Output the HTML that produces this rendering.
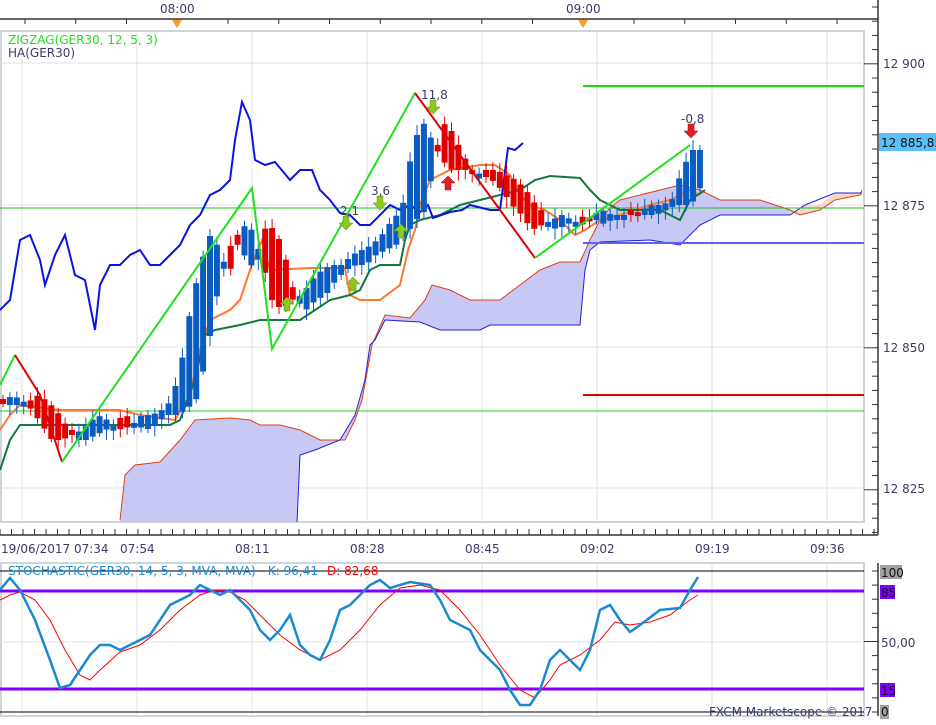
<!DOCTYPE html>
<html><head><meta charset="utf-8"><style>
body{margin:0;width:936px;height:720px;overflow:hidden;background:#fff;font-family:"Liberation Sans","DejaVu Sans",sans-serif}
svg text{font-family:"DejaVu Sans","Liberation Sans",sans-serif;font-size:12px;fill:#3a3a6a}
</style></head><body>
<svg width="936" height="720" viewBox="0 0 936 720" xmlns="http://www.w3.org/2000/svg">
<line x1="0" y1="19" x2="878" y2="19" stroke="#333" stroke-width="1.5"/>
<g id="toptk" stroke="#333"></g>
<text x="160" y="13">08:00</text><text x="566" y="13">09:00</text>
<polygon points="172,20 182,20 177,28" fill="#f5a020"/>
<polygon points="578,20 588,20 583,28" fill="#f5a020"/>
<rect x="1" y="31" width="863" height="491" fill="#fff" stroke="#ccd4dc" stroke-width="2"/>
<g stroke="#e0e0e0" stroke-width="1">
<line x1="22" y1="31" x2="22" y2="522"/><line x1="137" y1="31" x2="137" y2="522"/><line x1="252" y1="31" x2="252" y2="522"/><line x1="367" y1="31" x2="367" y2="522"/><line x1="482" y1="31" x2="482" y2="522"/><line x1="597" y1="31" x2="597" y2="522"/><line x1="712" y1="31" x2="712" y2="522"/><line x1="827" y1="31" x2="827" y2="522"/>
<line x1="0" y1="63" x2="864" y2="63"/><line x1="0" y1="205" x2="864" y2="205"/><line x1="0" y1="347" x2="864" y2="347"/><line x1="0" y1="488" x2="864" y2="488"/>
</g>
<polygon fill="#c8c8f5" points="120,520 125,475 135,465 160,462 180,440 195,420 230,418 250,420 260,425 280,425 300,430 320,440 345,440 355,420 362,400 372,345 385,315 410,318 425,300 432,285 450,290 470,300 500,300 520,285 540,270 560,262 580,262 590,240 600,220 610,208 620,200 640,195 660,190 680,185 700,190 720,200 760,200 790,210 790,215 720,215 700,225 680,245 650,240 600,242 590,250 585,270 580,325 490,325 480,330 440,330 420,322 385,320 375,340 370,345 365,380 355,415 340,440 315,450 300,455 297,522 120,522"/>
<polygon fill="#f5d8c8" points="790,210 800,215 820,210 835,200 860,195 862,195 862,193 835,193 820,205 805,205 790,215"/>
<polyline fill="none" stroke="#e04010" stroke-width="1" points="120,520 125,475 135,465 160,462 180,440 195,420 230,418 250,420 260,425 280,425 300,430 320,440 345,440 355,420 362,400 372,345 385,315 410,318 425,300 432,285 450,290 470,300 500,300 520,285 540,270 560,262 580,262 590,240 600,220 610,208 620,200 640,195 660,190 680,185 700,190 720,200 760,200 790,210 800,215 820,210 835,200 860,195 862,190"/>
<polyline fill="none" stroke="#2020e0" stroke-width="1" points="297,522 300,455 315,450 340,440 355,415 365,380 370,345 375,340 385,320 420,322 440,330 480,330 490,325 580,325 585,270 590,250 600,242 650,240 680,245 700,225 720,215 790,215 805,205 835,193 862,193"/>
<line x1="0" y1="208" x2="864" y2="208" stroke="#20c020" stroke-width="1"/>
<line x1="0" y1="411" x2="864" y2="411" stroke="#20d020" stroke-width="1"/>
<line x1="583" y1="86" x2="864" y2="86" stroke="#10e010" stroke-width="2"/>
<line x1="583" y1="395" x2="864" y2="395" stroke="#e00000" stroke-width="2"/>
<line x1="583" y1="243" x2="864" y2="243" stroke="#6060f0" stroke-width="2"/>
<polyline fill="none" stroke="#ff7830" stroke-width="2" points="0,430 10,415 20,405 60,410 120,410 140,415 175,420 190,395 200,350 210,320 230,310 240,300 250,270 262,240 270,270 310,268 345,268 350,295 360,300 380,300 400,285 408,250 415,230 420,205 430,180 450,170 480,165 495,165 510,175 520,195 530,205 545,210 560,220 575,235 585,230 600,220 620,215 650,205 670,200 690,190 700,195"/>
<polyline fill="none" stroke="#107840" stroke-width="2" points="0,470 10,440 20,425 170,425 180,420 195,380 205,335 215,330 240,325 260,320 300,320 330,300 350,295 360,290 370,270 380,265 400,265 405,240 410,225 420,220 440,215 460,205 480,200 520,190 535,180 550,176 580,178 590,190 600,200 610,205 620,210 660,210 670,215 680,220 690,200 705,190"/>
<polyline fill="none" stroke="#0a14e0" stroke-width="2" points="0,310 10,300 20,240 30,235 40,260 45,285 55,255 65,235 75,275 85,280 95,330 100,285 110,265 120,265 130,255 140,250 150,265 160,265 170,255 180,245 190,225 200,215 210,195 220,190 230,180 235,140 242,102 250,120 255,160 265,165 275,162 290,180 300,170 312,170 320,190 330,200 340,213 350,215 360,225 370,225 380,215 390,205 400,210 410,205 420,212 428,205 433,218 450,212 462,210 470,205 490,210 500,210 508,148 515,150 523,143"/>
<g id="candles"></g>
<polyline fill="none" stroke="#20e020" stroke-width="2" points="0,385 15,355"/>
<polyline fill="none" stroke="#e00000" stroke-width="2" points="15,355 40,395 62,462"/>
<polyline fill="none" stroke="#20e020" stroke-width="2" points="62,462 252,188 272,349 415,93"/>
<polyline fill="none" stroke="#e00000" stroke-width="2" points="415,93 535,258"/>
<polyline fill="none" stroke="#20e020" stroke-width="2" points="535,258 690,145"/>
<g id="marks"></g>
<text x="421" y="99">11,8</text><text x="371" y="195">3,6</text><text x="340" y="215">2,1</text><text x="681" y="123">-0,8</text>
<text x="8" y="44" style="fill:#20e020">ZIGZAG(GER30, 12, 5, 3)</text>
<text x="8" y="57">HA(GER30)</text>
<line x1="878" y1="0" x2="878" y2="535" stroke="#333" stroke-width="1.5"/>
<g id="rtk" stroke="#333"></g>
<text x="883" y="68">12 900</text><text x="883" y="210">12 875</text><text x="883" y="352">12 850</text><text x="883" y="493">12 825</text>
<rect x="879" y="133" width="57" height="18" fill="#5bc0f8"/>
<text x="881" y="147" style="fill:#111">12 885,85</text>
<line x1="0" y1="535" x2="878" y2="535" stroke="#333" stroke-width="1.5"/>
<g id="btk" stroke="#333"></g>
<text x="1" y="553">19/06/2017 07:34</text><text x="120" y="553">07:54</text><text x="235" y="553">08:11</text><text x="350" y="553">08:28</text><text x="465" y="553">08:45</text><text x="580" y="553">09:02</text><text x="695" y="553">09:19</text><text x="810" y="553">09:36</text>
<rect x="1" y="563" width="863" height="153" fill="#fff" stroke="#ccd4dc" stroke-width="2"/>
<g stroke="#e0e0e0"><line x1="22" y1="563" x2="22" y2="716"/><line x1="137" y1="563" x2="137" y2="716"/><line x1="252" y1="563" x2="252" y2="716"/><line x1="367" y1="563" x2="367" y2="716"/><line x1="482" y1="563" x2="482" y2="716"/><line x1="597" y1="563" x2="597" y2="716"/><line x1="712" y1="563" x2="712" y2="716"/><line x1="827" y1="563" x2="827" y2="716"/><line x1="0" y1="642" x2="864" y2="642"/></g>
<line x1="0" y1="571" x2="864" y2="571" stroke="#000"/>
<line x1="0" y1="712" x2="864" y2="712" stroke="#000"/>
<line x1="0" y1="591" x2="864" y2="591" stroke="#8000ff" stroke-width="3"/>
<line x1="0" y1="689" x2="864" y2="689" stroke="#8000ff" stroke-width="3"/>
<text x="8" y="575" style="fill:#1a8ad0" textLength="310" lengthAdjust="spacingAndGlyphs">STOCHASTIC(GER30, 14, 5, 3, MVA, MVA) - K: 96,41</text>
<text x="327" y="575" style="fill:#f00">D: 82,68</text>
<polyline fill="none" stroke="#f00" stroke-width="1" points="0,600 10,595 20,592 35,600 50,620 65,650 80,675 90,680 100,670 120,652 140,645 160,630 180,610 200,595 215,590 230,592 245,600 260,615 280,635 300,650 320,660 340,650 360,630 380,605 400,588 420,585 440,590 460,610 480,635 500,665 520,690 535,698 550,680 560,665 580,655 600,640 615,622 630,625 650,622 670,615 690,600 698,595"/>
<polyline fill="none" stroke="#1a8ad0" stroke-width="2.5" points="0,590 10,578 20,590 35,620 50,660 60,688 70,685 80,670 90,655 100,645 110,645 120,650 130,645 140,640 150,635 160,620 170,605 180,600 190,595 200,585 210,590 220,595 230,590 240,600 250,610 260,630 270,640 280,630 290,615 300,645 310,655 320,660 330,640 340,610 350,605 360,595 370,585 380,580 390,588 410,582 430,585 440,600 450,620 470,630 480,650 490,660 500,670 510,690 520,705 530,705 540,690 550,660 560,650 570,660 580,670 590,650 600,610 610,605 620,620 630,632 640,625 660,610 680,608 690,590 698,577"/>
<text x="709" y="716" style="fill:#3a3a6a">FXCM Marketscope © 2017</text>
<line x1="878" y1="563" x2="878" y2="716" stroke="#333" stroke-width="1.5"/>
<g id="stk" stroke="#333"></g>
<rect x="880" y="565" width="22" height="14" fill="#a0a0a0"/><text x="881" y="577" style="fill:#111">100</text>
<rect x="880" y="585" width="15" height="14" fill="#8000ff"/><text x="881" y="597" style="fill:#111">85</text>
<text x="881" y="647">50,00</text>
<rect x="880" y="683" width="15" height="14" fill="#8000ff"/><text x="881" y="695" style="fill:#111">15</text>
<rect x="880" y="705" width="9" height="14" fill="#a0a0a0"/><text x="881" y="716" style="fill:#111">0</text>
</svg>
<script>
(function(){
var NS="http://www.w3.org/2000/svg";
function el(p,t,a){var e=document.createElementNS(NS,t);for(var k in a)e.setAttribute(k,a[k]);document.getElementById(p).appendChild(e);return e;}
var ys=[405,395,400,410,425,440,440,435,430,420,415,425,430,425,415,415,410,400,360,300,260,230,260,270,225,230,260,300,310,300,295,280,270,265,265,255,250,245,235,220,210,150,120,140,160,170,170,170,175,180,190,205,215,230,225,220,215,220,225,215,210,215,215,215,210,205,205,200,170,150];
function Y(x){var f=(x-5)/10,i=Math.floor(f);if(i<0)return ys[0];if(i>=ys.length-1)return ys[ys.length-1];var t=f-i;return ys[i]*(1-t)+ys[i+1]*t;}
for(var x=0;x<=698;x+=6.9){var c=Y(x+6),o=Y(x-18);if(Math.abs(o-c)<4)o=c+((Math.floor(x)%3)-1)*5;
var tp=Math.min(o,c),h=Math.max(Math.abs(o-c),4);var col=c<o?"#0a5cc0":"#e00000";
el("candles","line",{x1:x+3,x2:x+3,y1:tp-4-(x%6),y2:tp+h+3+(x%8),stroke:col,"stroke-width":1});
el("candles","rect",{x:x,y:tp,width:6,height:h,fill:col});}
function arrow(x,y,down,col){var p=down?[x-3,y,x+3,y,x+3,y+7,x+7,y+7,x,y+14,x-7,y+7,x-3,y+7]:[x-3,y+14,x+3,y+14,x+3,y+7,x+7,y+7,x,y,x-7,y+7,x-3,y+7];el("marks","polygon",{points:p.join(","),fill:col,stroke:col=="#e02020"?"#a00":"#5a8a10","stroke-width":0.5});}
arrow(433,100,true,"#8cc820");arrow(380,196,true,"#8cc820");arrow(346,216,true,"#8cc820");arrow(691,124,true,"#e02020");
arrow(448,176,false,"#e02020");arrow(287,297,false,"#8cc820");arrow(353,277,false,"#8cc820");arrow(401,224,false,"#8cc820");
for(var x=25;x<878;x+=50.75)el("toptk","line",{x1:x,x2:x,y1:19,y2:24});
for(var x=0;x<878;x+=11.5){var m=Math.abs(((x-22)%115+115)%115)<1;el("btk","line",{x1:x,x2:x,y1:m?523:529,y2:535});}
for(var y=7;y<535;y+=14.2){var m=Math.abs(((y-63)%142+142)%142)<1;el("rtk","line",{x1:m?864:872,x2:878,y1:y,y2:y});}
for(var y=571;y<716;y+=14.1){var m=Math.abs(y-642)<2;el("stk","line",{x1:m?864:872,x2:878,y1:y,y2:y});}
})();
</script>
</body></html>
